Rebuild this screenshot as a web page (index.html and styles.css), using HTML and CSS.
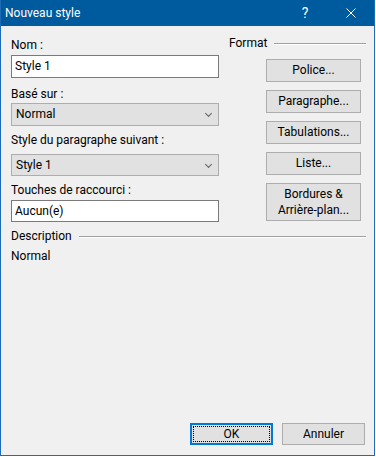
FILE: index.html
```html
<!DOCTYPE html>
<html lang="fr">
<head>
  <meta charset="UTF-8" />
  <meta name="viewport" content="width=device-width, initial-scale=1.0" />
  <title>Nouveau style</title>
  <link rel="stylesheet" href="styles.css">
</head>
<body>
  <div class="window">
    <div class="titlebar">
      <span class="title">Nouveau style</span>
      <span class="tb-btn">?</span>
      <span class="tb-btn">
        <svg width="10" height="10" viewBox="0 0 10 10"><path d="M0.5 0.5 L9.5 9.5 M9.5 0.5 L0.5 9.5" stroke="#fff" stroke-width="1" fill="none"/></svg>
      </span>
    </div>

    <div class="content">
      <div class="top">
        <div class="fields">
          <div class="label lbl-nom">Nom :</div>
          <div class="textbox tb-nom">Style 1</div>

          <div class="label lbl-base">Basé sur :</div>
          <div class="combo cb-base">Normal<span class="chev"></span></div>

          <div class="label lbl-suiv">Style du paragraphe suivant :</div>
          <div class="combo cb-suiv">Style 1<span class="chev"></span></div>

          <div class="label lbl-touch">Touches de raccourci :</div>
          <div class="textbox tb-touch">Aucun(e)</div>
        </div>

        <div class="format">
          <div class="group-title">Format<span class="rule"></span></div>
          <div class="fmt-buttons">
            <div class="btn">Police...</div>
            <div class="btn">Paragraphe...</div>
            <div class="btn">Tabulations...</div>
            <div class="btn">Liste...</div>
            <div class="btn tall">Bordures &amp;<br>Arrière-plan...</div>
          </div>
        </div>
      </div>

      <div class="group-title desc-title">Description<span class="rule"></span></div>
      <div class="desc-text">Normal</div>

      <div class="footer">
        <div class="btn dlg default">OK</div>
        <div class="btn dlg">Annuler</div>
      </div>
    </div>
  </div>
</body>
</html>
```

FILE: styles.css
```css
body {
  margin: 0;
  background: #fff;
  font-family: Roboto, "Noto Sans", sans-serif;
  font-size: 12px;
  color: #000;
}
.window {
  width: 375px;
  height: 456px;
  box-sizing: border-box;
  border: 1px solid #1e6bb8;
  border-top: none;
  background: #f0f0f0;
  display: flex;
  flex-direction: column;
}
.titlebar {
  height: 26px;
  background: #005a9e;
  color: #fff;
  display: flex;
  align-items: center;
  flex-shrink: 0;
}
.title {
  flex: 1;
  padding-left: 4px;
  line-height: 16px;
  margin-top: -1px;
}
.tb-btn {
  width: 46px;
  height: 26px;
  display: flex;
  align-items: center;
  justify-content: center;
  font-size: 14px;
}
.content {
  flex: 1;
  display: flex;
  flex-direction: column;
  padding: 11px 8px 10px 10px;
}
.top {
  display: flex;
  gap: 10px;
}
.fields {
  width: 208px;
  display: flex;
  flex-direction: column;
}
.label {
  line-height: 16px;
  height: 16px;
}
.textbox, .combo {
  box-sizing: border-box;
  height: 23px;
  line-height: 21px;
  padding-left: 3px;
  position: relative;
}
.textbox {
  background: #fff;
  border: 1px solid #7a7a7a;
}
.combo {
  background: #e1e1e1;
  border: 1px solid #adadad;
  padding-left: 4px;
}
.chev {
  position: absolute;
  right: 7px;
  top: 7px;
  width: 4px;
  height: 4px;
  border-right: 1px solid #606060;
  border-bottom: 1px solid #606060;
  transform: rotate(45deg);
}
.tb-nom { margin-top: 2px; }
.lbl-base { margin-top: 8px; }
.cb-base { margin-top: 1px; }
.lbl-suiv { margin-top: 6px; }
.cb-suiv { margin-top: 6px; height: 22px; line-height: 20px; }
.lbl-touch { margin-top: 6px; }
.tb-touch { margin-top: 2px; height: 22px; line-height: 20px; }

.format {
  flex: 1;
  margin-top: -2px;
}
.group-title {
  display: flex;
  align-items: center;
  line-height: 16px;
}
.rule {
  flex: 1;
  height: 0;
  border-top: 1px solid #a0a0a0;
  border-bottom: 1px solid #fff;
  margin-left: 7px;
  margin-top: 1px;
}
.fmt-buttons {
  margin-top: 8px;
  padding-right: 5px;
  display: flex;
  flex-direction: column;
  align-items: flex-end;
  gap: 8px;
}
.btn {
  box-sizing: border-box;
  width: 95px;
  height: 23px;
  line-height: 21px;
  background: #e1e1e1;
  border: 1px solid #adadad;
  text-align: center;
}
.btn.tall {
  height: 38px;
  line-height: 16px;
  padding-top: 2px;
}
.desc-title {
  margin-top: 6px;
}
.desc-text {
  margin-top: 4px;
  line-height: 16px;
}
.footer {
  margin-top: auto;
  display: flex;
  justify-content: flex-end;
  gap: 9px;
  padding-right: 1px;
}
.btn.dlg {
  width: 83px;
  height: 22px;
  line-height: 20px;
}
.btn.default {
  border: 2px solid #0078d7;
  line-height: 18px;
  position: relative;
}
.btn.default::after {
  content: "";
  position: absolute;
  inset: 1px;
  border: 1px dotted #000;
}
```
